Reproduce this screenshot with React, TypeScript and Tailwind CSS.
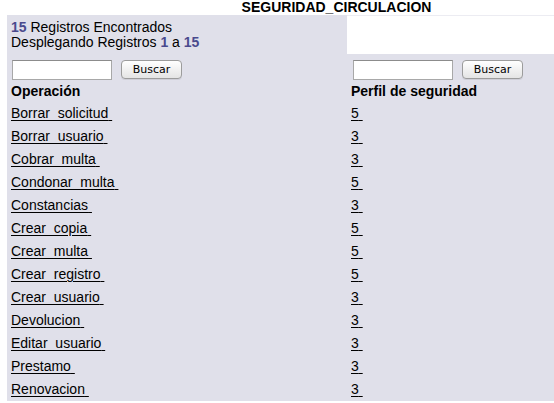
const operaciones = [
  { nombre: 'Borrar_solicitud', perfil: '5' },
  { nombre: 'Borrar_usuario', perfil: '3' },
  { nombre: 'Cobrar_multa', perfil: '3' },
  { nombre: 'Condonar_multa', perfil: '5' },
  { nombre: 'Constancias', perfil: '3' },
  { nombre: 'Crear_copia', perfil: '5' },
  { nombre: 'Crear_multa', perfil: '5' },
  { nombre: 'Crear_registro', perfil: '5' },
  { nombre: 'Crear_usuario', perfil: '3' },
  { nombre: 'Devolucion', perfil: '3' },
  { nombre: 'Editar_usuario', perfil: '3' },
  { nombre: 'Prestamo', perfil: '3' },
  { nombre: 'Renovacion', perfil: '3' },
];

function SearchBox({ offset }: { offset: string }) {
  return (
    <div className={`flex items-start gap-[9px] pt-[5px] ${offset}`}>
      <input
        type="text"
        className="h-[20px] w-[100px] border border-[#a8a8a8] border-t-[#8c8c8c] bg-white px-1 text-[13px] outline-none"
      />
      <button
        type="button"
        className="h-[19px] w-[61px] rounded-[4px] border border-[#9c9c9c] bg-gradient-to-b from-white to-[#e4e4e4] text-[11px] leading-[17px] text-black shadow-[0_1px_0_rgba(0,0,0,0.08)]"
        style={{ fontFamily: '"DejaVu Sans", sans-serif' }}
      >
        Buscar
      </button>
    </div>
  );
}

export default function App() {
  return (
    <div
      className="h-[403px] w-full overflow-hidden bg-white text-[14px] text-black"
      style={{ fontFamily: '"Liberation Sans", Arial, sans-serif' }}
    >
      <div className="w-[673px]">
        <div className="h-[15px] text-center text-[14px] font-bold leading-[15px]">SEGURIDAD_CIRCULACION</div>
        <div className="ml-[7px] grid grid-cols-[340px_1fr] bg-[#e0e0ea]">
          {/* resumen */}
          <div className="h-[40px] px-[4px] pt-[5px] leading-[15px]">
            <div>
              <span className="font-bold text-[#4a4a8e]">15</span> Registros Encontrados
            </div>
            <div>
              Desplegando Registros <span className="font-bold text-[#4a4a8e]">1</span> a{' '}
              <span className="font-bold text-[#4a4a8e]">15</span>
            </div>
          </div>
          <div className="h-[39px] border-t border-[#ececf2] bg-white" />

          {/* busqueda */}
          <div className="h-[29px]">
            <SearchBox offset="pl-[5px]" />
          </div>
          <div className="h-[29px]">
            <SearchBox offset="pl-[6px]" />
          </div>

          {/* encabezados */}
          <div className="h-[18px] px-[4px] font-bold leading-[15px]">Operación</div>
          <div className="h-[18px] px-[4px] font-bold leading-[15px]">Perfil de seguridad</div>

          {operaciones.map((op) => (
            <div key={op.nombre} className="contents">
              <div className="h-[23px] px-[4px] leading-[23px]">
                <a href="#" className="text-black underline underline-offset-[2px]">
                  {op.nombre}
                  {'\u00a0'}
                </a>
              </div>
              <div className="h-[23px] px-[4px] leading-[23px]">
                <a href="#" className="text-black underline underline-offset-[2px]">
                  {op.perfil}
                  {'\u00a0'}
                </a>
              </div>
            </div>
          ))}
        </div>
      </div>
    </div>
  );
}
